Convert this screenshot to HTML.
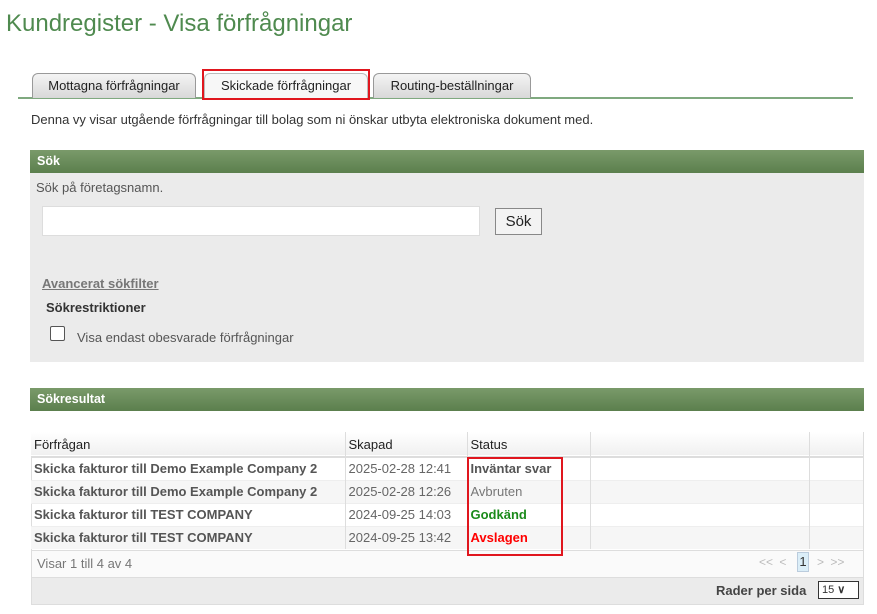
<!DOCTYPE html>
<html><head><meta charset="utf-8"><style>
*{box-sizing:border-box}
body{margin:0;width:877px;height:614px;background:#fff;font-family:"Liberation Sans",Arial,sans-serif;font-size:13px;color:#333;position:relative;overflow:hidden}
.a{position:absolute}
.title{left:6px;top:10px;font-size:24px;color:#4f8a4f}
.tab{top:73px;height:25px;border:1px solid #999;border-bottom:none;border-radius:6px 6px 0 0;background:linear-gradient(#f4f4f4,#d8d8d8);text-align:center;line-height:23px;font-size:13px;color:#222}
.hdr{left:30px;width:834px;height:23px;background:linear-gradient(#7a9a6a,#5b7f4d);color:#fff;font-weight:bold;font-size:12.5px;line-height:23px;padding-left:7px}
table{border-collapse:collapse;font-size:13px}
td{border-right:1px solid #ddd;padding:0 3px;height:23px;white-space:nowrap}
</style></head><body>
<div class="a title">Kundregister - Visa förfrågningar</div>
<div class="a" style="left:18px;top:97px;width:835px;height:2px;background:#7fa97f"></div>
<div class="a tab" style="left:32px;width:164px">Mottagna förfrågningar</div>
<div class="a tab" style="left:204px;width:164px;background:#f7f7f7;height:26px;border-color:#bbb">Skickade förfrågningar</div>
<div class="a" style="left:202px;top:69px;width:168px;height:31px;border:2px solid #e0161e"></div>
<div class="a tab" style="left:373px;width:158px">Routing-beställningar</div>
<div class="a" style="left:31px;top:112px;font-size:13px">Denna vy visar utgående förfrågningar till bolag som ni önskar utbyta elektroniska dokument med.</div>
<div class="a hdr" style="top:150px">Sök</div>
<div class="a" style="left:30px;top:173px;width:834px;height:189px;background:#ebebeb"></div>
<div class="a" style="left:36px;top:180px;color:#555">Sök på företagsnamn.</div>
<div class="a" style="left:42px;top:206px;width:438px;height:30px;background:#fff;border:1px solid #ddd"></div>
<div class="a" style="left:495px;top:208px;width:47px;height:27px;background:#f3f3f3;border:1px solid #888;font-size:15px;text-align:center;line-height:25px;color:#222">Sök</div>
<div class="a" style="left:42px;top:276px;color:#777;font-weight:bold;text-decoration:underline">Avancerat sökfilter</div>
<div class="a" style="left:46px;top:300px;color:#333;font-weight:bold">Sökrestriktioner</div>
<div class="a" style="left:50px;top:326px;width:15px;height:15px;border:1px solid #555;border-radius:2px;background:#fff"></div>
<div class="a" style="left:77px;top:330px;color:#555;font-size:13px">Visa endast obesvarade förfrågningar</div>
<div class="a hdr" style="top:388px">Sökresultat</div>
<div class="a" style="left:31px;top:432px;width:833px;height:173px;border:1px solid #ddd;background:#fff"></div>
<table class="a" style="left:31px;top:432px;width:833px">
<tr style="background:linear-gradient(#fff,#f0f0f0);height:25px;border-bottom:2px solid #ddd;color:#222"><td style="width:314px">Förfrågan</td><td style="width:122px">Skapad</td><td style="width:123px">Status</td><td style="width:219px"></td><td></td></tr>
<tr style="border-bottom:1px solid #eee"><td><b style="color:#555">Skicka fakturor till Demo Example Company 2</b></td><td style="color:#666">2025-02-28 12:41</td><td><b style="color:#555">Inväntar svar</b></td><td></td><td></td></tr>
<tr style="background:#f6f6f6;border-bottom:1px solid #eee"><td><b style="color:#555">Skicka fakturor till Demo Example Company 2</b></td><td style="color:#666">2025-02-28 12:26</td><td style="color:#777">Avbruten</td><td></td><td></td></tr>
<tr style="border-bottom:1px solid #eee"><td><b style="color:#555">Skicka fakturor till TEST COMPANY</b></td><td style="color:#666">2024-09-25 14:03</td><td><b style="color:#1a8a1a">Godkänd</b></td><td></td><td></td></tr>
<tr style="background:#f6f6f6"><td><b style="color:#555">Skicka fakturor till TEST COMPANY</b></td><td style="color:#666">2024-09-25 13:42</td><td><b style="color:#f00">Avslagen</b></td><td></td><td></td></tr>
</table>
<div class="a" style="left:32px;top:550px;width:831px;height:27px;background:#fafafa;border-top:1px solid #ddd"></div>
<div class="a" style="left:37px;top:556px;color:#777;font-size:13px">Visar 1 till 4 av 4</div>
<div class="a" style="left:759px;top:555px;color:#bbb;font-size:12px;word-spacing:3px">&lt;&lt; &lt;</div>
<div class="a" style="left:797px;top:552px;width:12px;height:20px;background:#dbeef8;border:1px solid #bcd;text-align:center;line-height:18px;color:#333">1</div>
<div class="a" style="left:817px;top:555px;color:#bbb;font-size:12px;word-spacing:3px">&gt; &gt;&gt;</div>
<div class="a" style="left:32px;top:577px;width:831px;height:27px;background:#ebebeb;border-top:1px solid #ddd"></div>
<div class="a" style="left:716px;top:583px;color:#444;font-weight:bold;font-size:13px">Rader per sida</div>
<div class="a" style="left:818px;top:581px;width:41px;height:18px;background:#fff;border:1px solid #333;font-size:11px;line-height:16px;padding-left:3px">15 <b>∨</b></div>
<div class="a" style="left:467px;top:457px;width:96px;height:99px;border:2px solid #e0161e"></div>
</body></html>
